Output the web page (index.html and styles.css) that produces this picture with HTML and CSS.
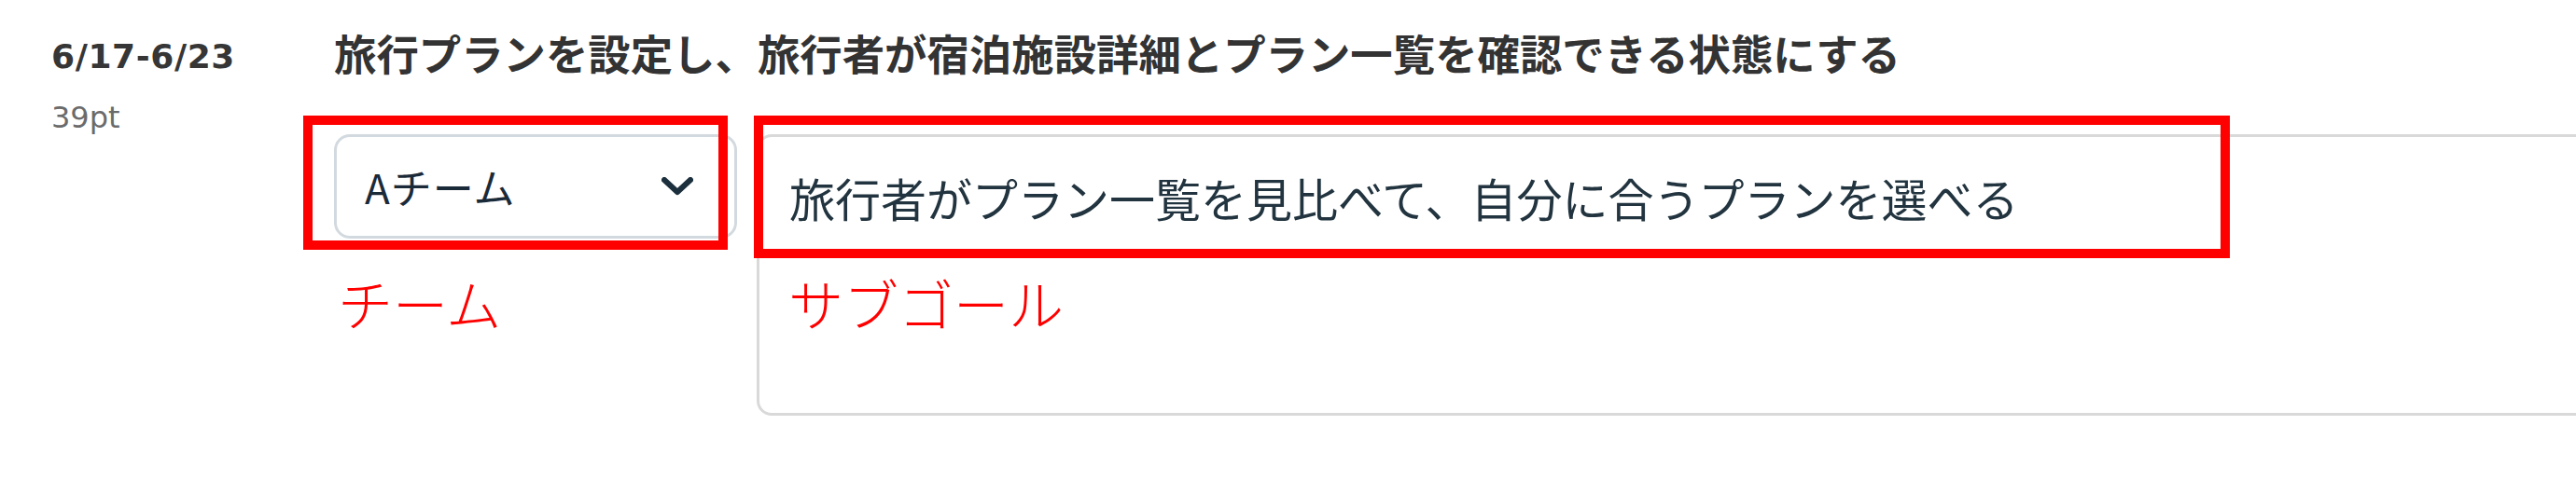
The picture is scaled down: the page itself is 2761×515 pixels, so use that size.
FILE: index.html
```html
<!DOCTYPE html>
<html lang="ja">
<head>
<meta charset="utf-8">
<title>スプリント</title>
<link rel="stylesheet" href="styles.css">
</head>
<body>
<div class="row">
  <div class="side">
    <div class="date">6/17-6/23</div>
    <div class="points">39pt</div>
  </div>
  <div class="main">
    <h2 class="title">旅行プランを設定し、旅行者が宿泊施設詳細とプラン一覧を確認できる状態にする</h2>
    <div class="fields">
      <div class="select">
        <span class="select-value">Aチーム</span>
        <svg class="chevron" width="34" height="20" viewBox="0 0 34 20"><polyline points="3,3 17,16 31,3" fill="none" stroke="#1c2f3d" stroke-width="6" stroke-linecap="round" stroke-linejoin="round"/></svg>
      </div>
      <div class="goal">旅行者がプラン一覧を見比べて、自分に合うプランを選べる</div>
      <div class="mark mark-team"></div>
      <div class="mark mark-goal"></div>
      <div class="note note-team">チーム</div>
      <div class="note note-goal">サブゴール</div>
    </div>
  </div>
</div>
</body>
</html>
```

FILE: styles.css
```css
html, body {
  margin: 0;
  padding: 0;
  background: #ffffff;
}
body {
  width: 2761px;
  height: 515px;
  overflow: hidden;
  font-family: "Noto Sans CJK JP", sans-serif;
}
.row {
  display: flex;
  padding-top: 29px;
}
.side {
  width: 358px;
  flex: none;
  box-sizing: border-box;
  padding-left: 55px;
  padding-top: 10px;
}
.date {
  font-family: "DejaVu Sans", sans-serif;
  font-weight: 700;
  font-size: 36px;
  line-height: 44px;
  color: #363636;
  letter-spacing: 0.6px;
}
.points {
  font-family: "DejaVu Sans", sans-serif;
  font-size: 32px;
  line-height: 40px;
  color: #6b6b6b;
  margin-top: 23px;
}
.main {
  flex: 1;
  min-width: 0;
}
.title {
  margin: 0;
  font-family: "Noto Sans CJK JP", sans-serif;
  font-weight: 700;
  font-size: 45.4px;
  line-height: 54px;
  color: #333333;
  white-space: nowrap;
}
.fields {
  position: relative;
  display: flex;
  align-items: flex-start;
  gap: 21px;
  margin-top: 61px;
  margin-right: -60px;
}
.select {
  flex: none;
  width: 432px;
  height: 112px;
  box-sizing: border-box;
  border: 3px solid #d3dadf;
  border-radius: 17px;
  display: flex;
  align-items: center;
  justify-content: space-between;
  padding: 0 44px 0 30px;
  color: #1b2a38;
  font-size: 44px;
  letter-spacing: 1px;
}
.select-value {
  line-height: 1;
}
.chevron {
  display: block;
}
.goal {
  flex: 1;
  height: 302px;
  box-sizing: border-box;
  border: 3px solid #d9d9d9;
  border-radius: 16px;
  padding: 31px 0 0 32px;
  font-size: 49px;
  line-height: 1.4;
  color: #22343f;
  white-space: nowrap;
}
.mark {
  position: absolute;
  top: -20px;
  border: 10px solid #ff0000;
  box-sizing: border-box;
}
.mark-team {
  left: -33px;
  width: 455px;
  height: 144px;
}
.mark-goal {
  left: 450px;
  width: 1582px;
  height: 153px;
}
.note {
  position: absolute;
  top: 151px;
  color: #ff0000;
  font-size: 59px;
  font-weight: 300;
  line-height: 1;
  white-space: nowrap;
}
.note-team {
  left: 4px;
}
.note-goal {
  left: 487px;
}
```
